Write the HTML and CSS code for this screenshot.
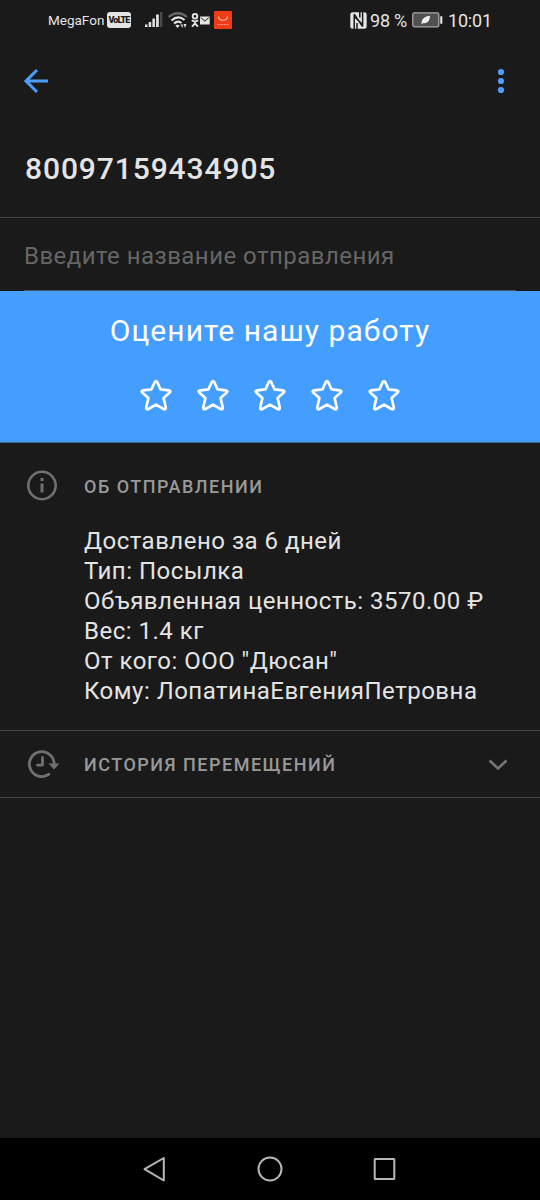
FILE: index.html
```html
<!DOCTYPE html>
<html lang="ru">
<head>
<meta charset="utf-8">
<title>80097159434905</title>
<link rel="stylesheet" href="styles.css">
</head>
<body>
<div class="screen">
  <header class="status">
    <div class="status-left">
      <span class="carrier">MegaFon</span>
      <span class="volte">VoLTE</span>
      <svg class="signal" width="18" height="16" viewBox="0 0 18 16">
        <path fill="#e4e4e4" d="M0 12.500h2.500v2.500H0zM3.700 10h2.500v5H3.700zM7.400 6.500h2.500V15H7.400zM11.100 2.500h2.700V15h-2.700z"/>
        <path fill="#4a4a4a" d="M15 0h2.400v15H15z"/>
      </svg>
      <svg class="wifi" width="20" height="17" viewBox="0 0 20 17" fill="none" stroke-width="2.200">
        <path stroke="#686868" d="M.5 5Q10-2.500 19 5"/>
        <path stroke="#e4e4e4" d="M3.500 8.500Q10 2.500 16.500 8M6 11.500q4-3.500 7.500-.5"/>
        <path fill="#e4e4e4" d="M7.300 13.500q2.200-1.500 4.400 0L9.500 16zM12.300 12.500h2.500V16zM15.500 12l3 0-1.500 4z"/>
      </svg>
      <svg class="ok" width="19" height="15" viewBox="0 0 19 15">
        <g fill="none" stroke="#e4e4e4" stroke-width="1.900">
          <circle cx="4" cy="3.300" r="2.300"/>
          <path d="M.8 7.300q3.200 2.300 6.400 0M4 8.500v1.500M1 13.700l3-3.200 3 3.200"/>
        </g>
        <path fill="#e4e4e4" d="M9 3.500h9.700v8H9z"/>
        <path fill="none" stroke="#1a1a1a" d="M9.800 4.600l4 3.500 4-3.500"/>
      </svg>
      <svg class="shop" width="18" height="18" viewBox="0 0 18 18">
        <rect width="18" height="18" rx="1" fill="#f23c17"/>
        <path fill="none" stroke="#ffc3b2" stroke-width="1.200" d="M4.500 5.500c.5 5 8.500 5 9 0"/>
        <path fill="none" stroke="#ff9c80" stroke-dasharray="2 1" d="M3.500 13.500h11"/>
      </svg>
    </div>
    <div class="status-right">
      <svg class="nfc" width="17" height="17" viewBox="0 0 17 17">
        <rect x=".3" y=".3" width="16.400" height="16.400" rx="2.500" fill="#e4e4e4"/>
        <path fill="none" stroke="#1a1a1a" stroke-width="1.500" d="M4.200 17V4.200L12.600 12.800V0M4.200 2.200L12.600 14.700M7 11v6M9.800 0v5.500"/>
      </svg>
      <span class="percent">98 %</span>
      <svg class="battery" width="31" height="16" viewBox="0 0 31 16">
        <rect x=".8" y=".8" width="26" height="14" rx="1.500" fill="#505050" stroke="#a8a8a8" stroke-width="1.300"/>
        <path fill="#eee" d="M28.300 4.200h2v7.600h-2zM9.500 12c0-5 3-7.800 8.500-8.200-.2 5-2.300 8.200-7 7.200l-.8 1.200z"/>
      </svg>
      <span class="clock">10:01</span>
    </div>
  </header>

  <nav class="toolbar">
    <svg width="26" height="26" viewBox="0 0 26 26" fill="none" stroke="#4a9dfa" stroke-width="3">
      <path d="M25 13H3.500M14 2L3 13l11 11"/>
    </svg>
    <svg width="8" height="26" viewBox="0 0 8 26" fill="#4a9dfa">
      <circle cx="4" cy="4" r="3.100"/><circle cx="4" cy="13" r="3.100"/><circle cx="4" cy="22" r="3.100"/>
    </svg>
  </nav>

  <h1 class="track">80097159434905</h1>

  <div class="name-field"><div class="name-input"><span class="hint">Введите название отправления</span></div></div>

  <section class="rate">
    <h2 class="rate-title">Оцените нашу работу</h2>
    <div class="stars">
      <svg class="star" viewBox="0 0 34 34"><path d="M15.700 4.200Q17 1.800 18.300 4.200L21.500 11.300 29.800 12.300Q32.500 12.800 30.500 14.800L24.600 20 26.700 29.300Q27 32.200 24.500 31L17 26.600 9.500 31Q7 32.200 7.300 29.300L9.400 20 3.500 14.800Q1.500 12.800 4.200 12.300L12.500 11.300Z"/></svg>
      <svg class="star" viewBox="0 0 34 34"><path d="M15.700 4.200Q17 1.800 18.300 4.200L21.500 11.300 29.800 12.300Q32.500 12.800 30.500 14.800L24.600 20 26.700 29.300Q27 32.200 24.500 31L17 26.600 9.500 31Q7 32.200 7.300 29.300L9.400 20 3.500 14.800Q1.500 12.800 4.200 12.300L12.500 11.300Z"/></svg>
      <svg class="star" viewBox="0 0 34 34"><path d="M15.700 4.200Q17 1.800 18.300 4.200L21.500 11.300 29.800 12.300Q32.500 12.800 30.500 14.800L24.600 20 26.700 29.300Q27 32.200 24.500 31L17 26.600 9.500 31Q7 32.200 7.300 29.300L9.400 20 3.500 14.800Q1.500 12.800 4.200 12.300L12.500 11.300Z"/></svg>
      <svg class="star" viewBox="0 0 34 34"><path d="M15.700 4.200Q17 1.800 18.300 4.200L21.500 11.300 29.800 12.300Q32.500 12.800 30.500 14.800L24.600 20 26.700 29.300Q27 32.200 24.500 31L17 26.600 9.500 31Q7 32.200 7.300 29.300L9.400 20 3.500 14.800Q1.500 12.800 4.200 12.300L12.500 11.300Z"/></svg>
      <svg class="star" viewBox="0 0 34 34"><path d="M15.700 4.200Q17 1.800 18.300 4.200L21.500 11.300 29.800 12.300Q32.500 12.800 30.500 14.800L24.600 20 26.700 29.300Q27 32.200 24.500 31L17 26.600 9.500 31Q7 32.200 7.300 29.300L9.400 20 3.500 14.800Q1.500 12.800 4.200 12.300L12.500 11.300Z"/></svg>
    </div>
  </section>

  <section class="about">
    <div class="section-head">
      <svg width="32" height="32" viewBox="0 0 32 32" fill="none" stroke="#707070" stroke-width="2.600">
        <circle cx="16" cy="15.500" r="13.700"/><path stroke-width="3" d="M16 13.500v9M16 8v3"/>
      </svg>
      <h3 class="label">ОБ ОТПРАВЛЕНИИ</h3>
    </div>
    <div class="details">
      <p>Доставлено за 6 дней</p>
      <p>Тип: Посылка</p>
      <p>Объявленная ценность: 3570.00 ₽</p>
      <p>Вес: 1.4 кг</p>
      <p>От кого: ООО "Дюсан"</p>
      <p>Кому: ЛопатинаЕвгенияПетровна</p>
    </div>
  </section>

  <section class="history">
    <div class="section-head">
      <svg width="34" height="32" viewBox="0 0 34 32" fill="none" stroke="#707070" stroke-width="2.800">
        <path stroke-linecap="round" d="M23 26.200A12.400 12.400 0 1 1 28.200 16.500"/>
        <path stroke-linecap="round" stroke-linejoin="round" d="M16.500 9.500v7.700H11.500"/>
        <path fill="#707070" stroke="none" d="M22.500 15.500h11L28 21.500z"/>
      </svg>
      <h3 class="label label-history">ИСТОРИЯ ПЕРЕМЕЩЕНИЙ</h3>
    </div>
    <svg class="chevron" width="20" height="12" viewBox="0 0 20 12" fill="none" stroke="#757575" stroke-width="2.700"><path d="M1.500 1.500l8.500 8 8.500-8"/></svg>
  </section>

  <main class="space"></main>

  <footer class="navbar">
    <svg width="26" height="26" viewBox="0 0 26 26"><path d="M20.800 2v22.500L1.500 13.200z"/></svg>
    <svg width="26" height="26" viewBox="0 0 26 26"><circle cx="13" cy="13" r="11.500"/></svg>
    <svg width="26" height="26" viewBox="0 0 26 26"><rect x="3.700" y="3" width="19.600" height="20" rx=".5"/></svg>
  </footer>
</div>
</body>
</html>
```
FILE: styles.css
```css
* { box-sizing: border-box; margin: 0; padding: 0; }
body { background: #1a1a1a; color: #e4e4e4; font-family: Roboto, "Noto Sans", sans-serif; }
svg { display: block; flex: none; }
.screen { width: 540px; height: 1200px; display: flex; flex-direction: column; overflow: hidden; }

.status { height: 40px; display: flex; justify-content: space-between; padding: 0 48px; }
.status-left, .status-right { display: flex; align-items: center; white-space: nowrap; }
.carrier { font-size: 13.5px; width: 56px; }
.volte { margin-left: 3px; width: 24px; height: 16px; border-radius: 3px; background: #e4e4e4; color: #1a1a1a; font-size: 9px; font-weight: 900; line-height: 16px; text-align: center; letter-spacing: -.9px; }
.signal { margin-left: 14px; }
.wifi { margin-left: 5px; }
.ok { margin-left: 3px; }
.shop { margin-left: 4px; }
.percent { margin-left: 3px; width: 38px; font-size: 18px; letter-spacing: -.2px; }
.battery { margin-left: 4px; }
.clock { margin-left: 5px; width: 44px; font-size: 18px; letter-spacing: -.2px; }

.toolbar { height: 82px; padding: 0 35px 0 23px; display: flex; align-items: center; justify-content: space-between; }
.track { height: 96px; padding: 0 25px; border-bottom: 1px solid #434343; font-size: 30px; font-weight: 500; line-height: 94px; letter-spacing: .9px; }
.name-field { height: 73px; padding: 0 24px; }
.name-input { height: 73px; border-bottom: 1px solid #45566a; color: #666; font-size: 24px; line-height: 77px; }
.hint { letter-spacing: .46px; white-space: nowrap; }

.rate { height: 152px; background: #449eff; border-bottom: 1px solid #376590; text-align: center; color: #fff; }
.rate-title { padding-top: 20px; font-size: 30px; line-height: 40px; font-weight: 400; letter-spacing: 1.05px; }
.stars { display: flex; justify-content: center; gap: 23px; padding-top: 27px; }
.star { width: 34px; height: 34px; fill: none; stroke: #fff; stroke-width: 2.700; stroke-linejoin: round; }

.about { height: 288px; border-bottom: 1px solid #434343; padding: 27px 26px 0; }
.section-head { display: flex; align-items: center; }
.label { margin-left: 26px; color: #999; font-size: 18px; font-weight: 500; white-space: nowrap; letter-spacing: 1.5px; }
.label-history { margin-left: 24px; }
.details { padding: 24px 0 0 58px; font-size: 24px; line-height: 30px; letter-spacing: .49px; white-space: nowrap; }
.history { height: 67px; padding: 0 32px 0 26px; border-bottom: 1px solid #434343; display: flex; align-items: center; justify-content: space-between; }
.chevron { margin-top: 2px; }
.space { flex: 1; }
.navbar { height: 62px; background: #000; display: flex; justify-content: space-between; padding: 18px 143px 0; }
.navbar svg { fill: none; stroke: #b8b8b8; stroke-width: 2; stroke-linejoin: round; }
```
